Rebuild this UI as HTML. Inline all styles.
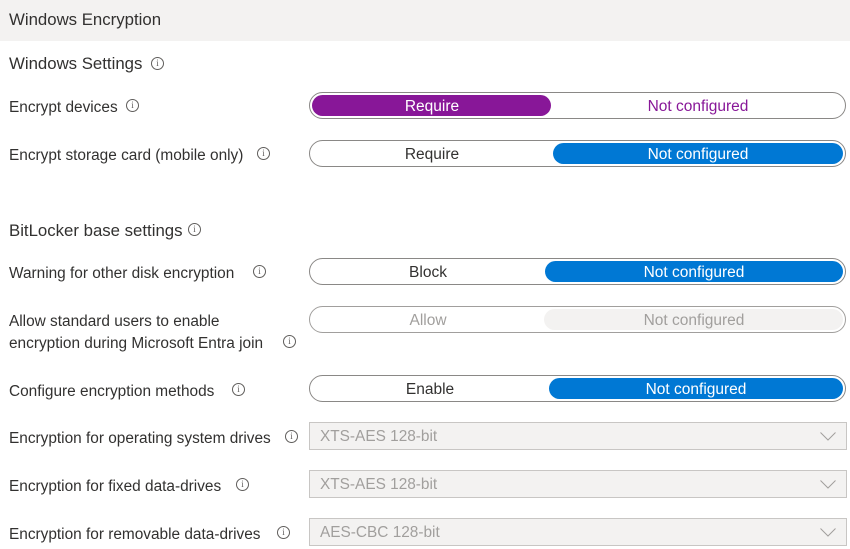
<!DOCTYPE html>
<html><head><style>
body{margin:0;width:850px;height:549px;background:#fff;position:relative;overflow:hidden;font-family:"Liberation Sans",sans-serif;color:#323130}
.a{position:absolute;white-space:nowrap}
.hdr{position:absolute;left:0;top:0;width:850px;height:41px;background:#f3f2f1}
.t{font-size:16.8px;}
.l{font-size:15.4px;}
.i{position:absolute;width:11px;height:11px;border:1px solid #605e5c;border-radius:50%;font-size:9px;line-height:11px;text-align:center;color:#605e5c;font-family:"Liberation Serif",serif}
.tg{position:absolute;left:309px;width:535px;height:25px;border:1px solid #8a8886;border-radius:14px;font-size:15.5px}
.tg .f{position:absolute;top:2px;height:21px;border-radius:11px}
.tg span{position:absolute;top:5px;transform:translateX(-50%)}
.dd{position:absolute;left:309px;width:536px;height:26px;background:#f3f2f1;border:1px solid #c8c6c4;font-size:15.4px;color:#a19f9d}
.dd span{position:absolute;left:10px;top:5px}
.dd svg{position:absolute;right:10px;top:9px}
</style></head><body>
<div class="hdr"></div>
<div class="a t" style="left:9px;top:10px">Windows Encryption</div>
<div class="a t" style="left:9px;top:54px">Windows Settings</div><div class="i" style="left:151px;top:57px">i</div>
<div class="a l" style="left:9px;top:99px">Encrypt devices</div><div class="i" style="left:126px;top:99px">i</div>
<div class="a l" style="left:9px;top:147px">Encrypt storage card (mobile only)</div><div class="i" style="left:257px;top:147px">i</div>
<div class="a t" style="left:9px;top:221px">BitLocker base settings</div><div class="i" style="left:188px;top:223px">i</div>
<div class="a l" style="left:9px;top:265px">Warning for other disk encryption</div><div class="i" style="left:253px;top:265px">i</div>
<div class="a l" style="left:9px;top:313px">Allow standard users to enable</div>
<div class="a l" style="left:9px;top:335px">encryption during Microsoft Entra join</div><div class="i" style="left:283px;top:335px">i</div>
<div class="a l" style="left:9px;top:383px">Configure encryption methods</div><div class="i" style="left:232px;top:383px">i</div>
<div class="a l" style="left:9px;top:430px">Encryption for operating system drives</div><div class="i" style="left:285px;top:430px">i</div>
<div class="a l" style="left:9px;top:478px">Encryption for fixed data-drives</div><div class="i" style="left:236px;top:478px">i</div>
<div class="a l" style="left:9px;top:526px">Encryption for removable data-drives</div><div class="i" style="left:277px;top:526px">i</div>

<div class="tg" style="top:92px"><div class="f" style="left:2px;width:239px;background:#881798"></div><span style="left:122px;color:#fff">Require</span><span style="left:388px;color:#881798">Not configured</span></div>
<div class="tg" style="top:140px"><div class="f" style="left:243px;width:290px;background:#0078d4"></div><span style="left:122px">Require</span><span style="left:388px;color:#fff">Not configured</span></div>
<div class="tg" style="top:258px"><div class="f" style="left:235px;width:298px;background:#0078d4"></div><span style="left:118px">Block</span><span style="left:384px;color:#fff">Not configured</span></div>
<div class="tg" style="top:306px;border-color:#a19f9d"><div class="f" style="left:234px;width:299px;background:#f3f2f1"></div><span style="left:118px;color:#a19f9d">Allow</span><span style="left:384px;color:#a19f9d">Not configured</span></div>
<div class="tg" style="top:375px"><div class="f" style="left:239px;width:294px;background:#0078d4"></div><span style="left:120px">Enable</span><span style="left:386px;color:#fff">Not configured</span></div>

<div class="dd" style="top:422px"><span>XTS-AES 128-bit</span><svg width="16" height="9"><path d="M0.5 0.5L8 8L15.5 0.5" fill="none" stroke="#a19f9d"/></svg></div>
<div class="dd" style="top:470px"><span>XTS-AES 128-bit</span><svg width="16" height="9"><path d="M0.5 0.5L8 8L15.5 0.5" fill="none" stroke="#a19f9d"/></svg></div>
<div class="dd" style="top:518px"><span>AES-CBC 128-bit</span><svg width="16" height="9"><path d="M0.5 0.5L8 8L15.5 0.5" fill="none" stroke="#a19f9d"/></svg></div>
</body></html>
